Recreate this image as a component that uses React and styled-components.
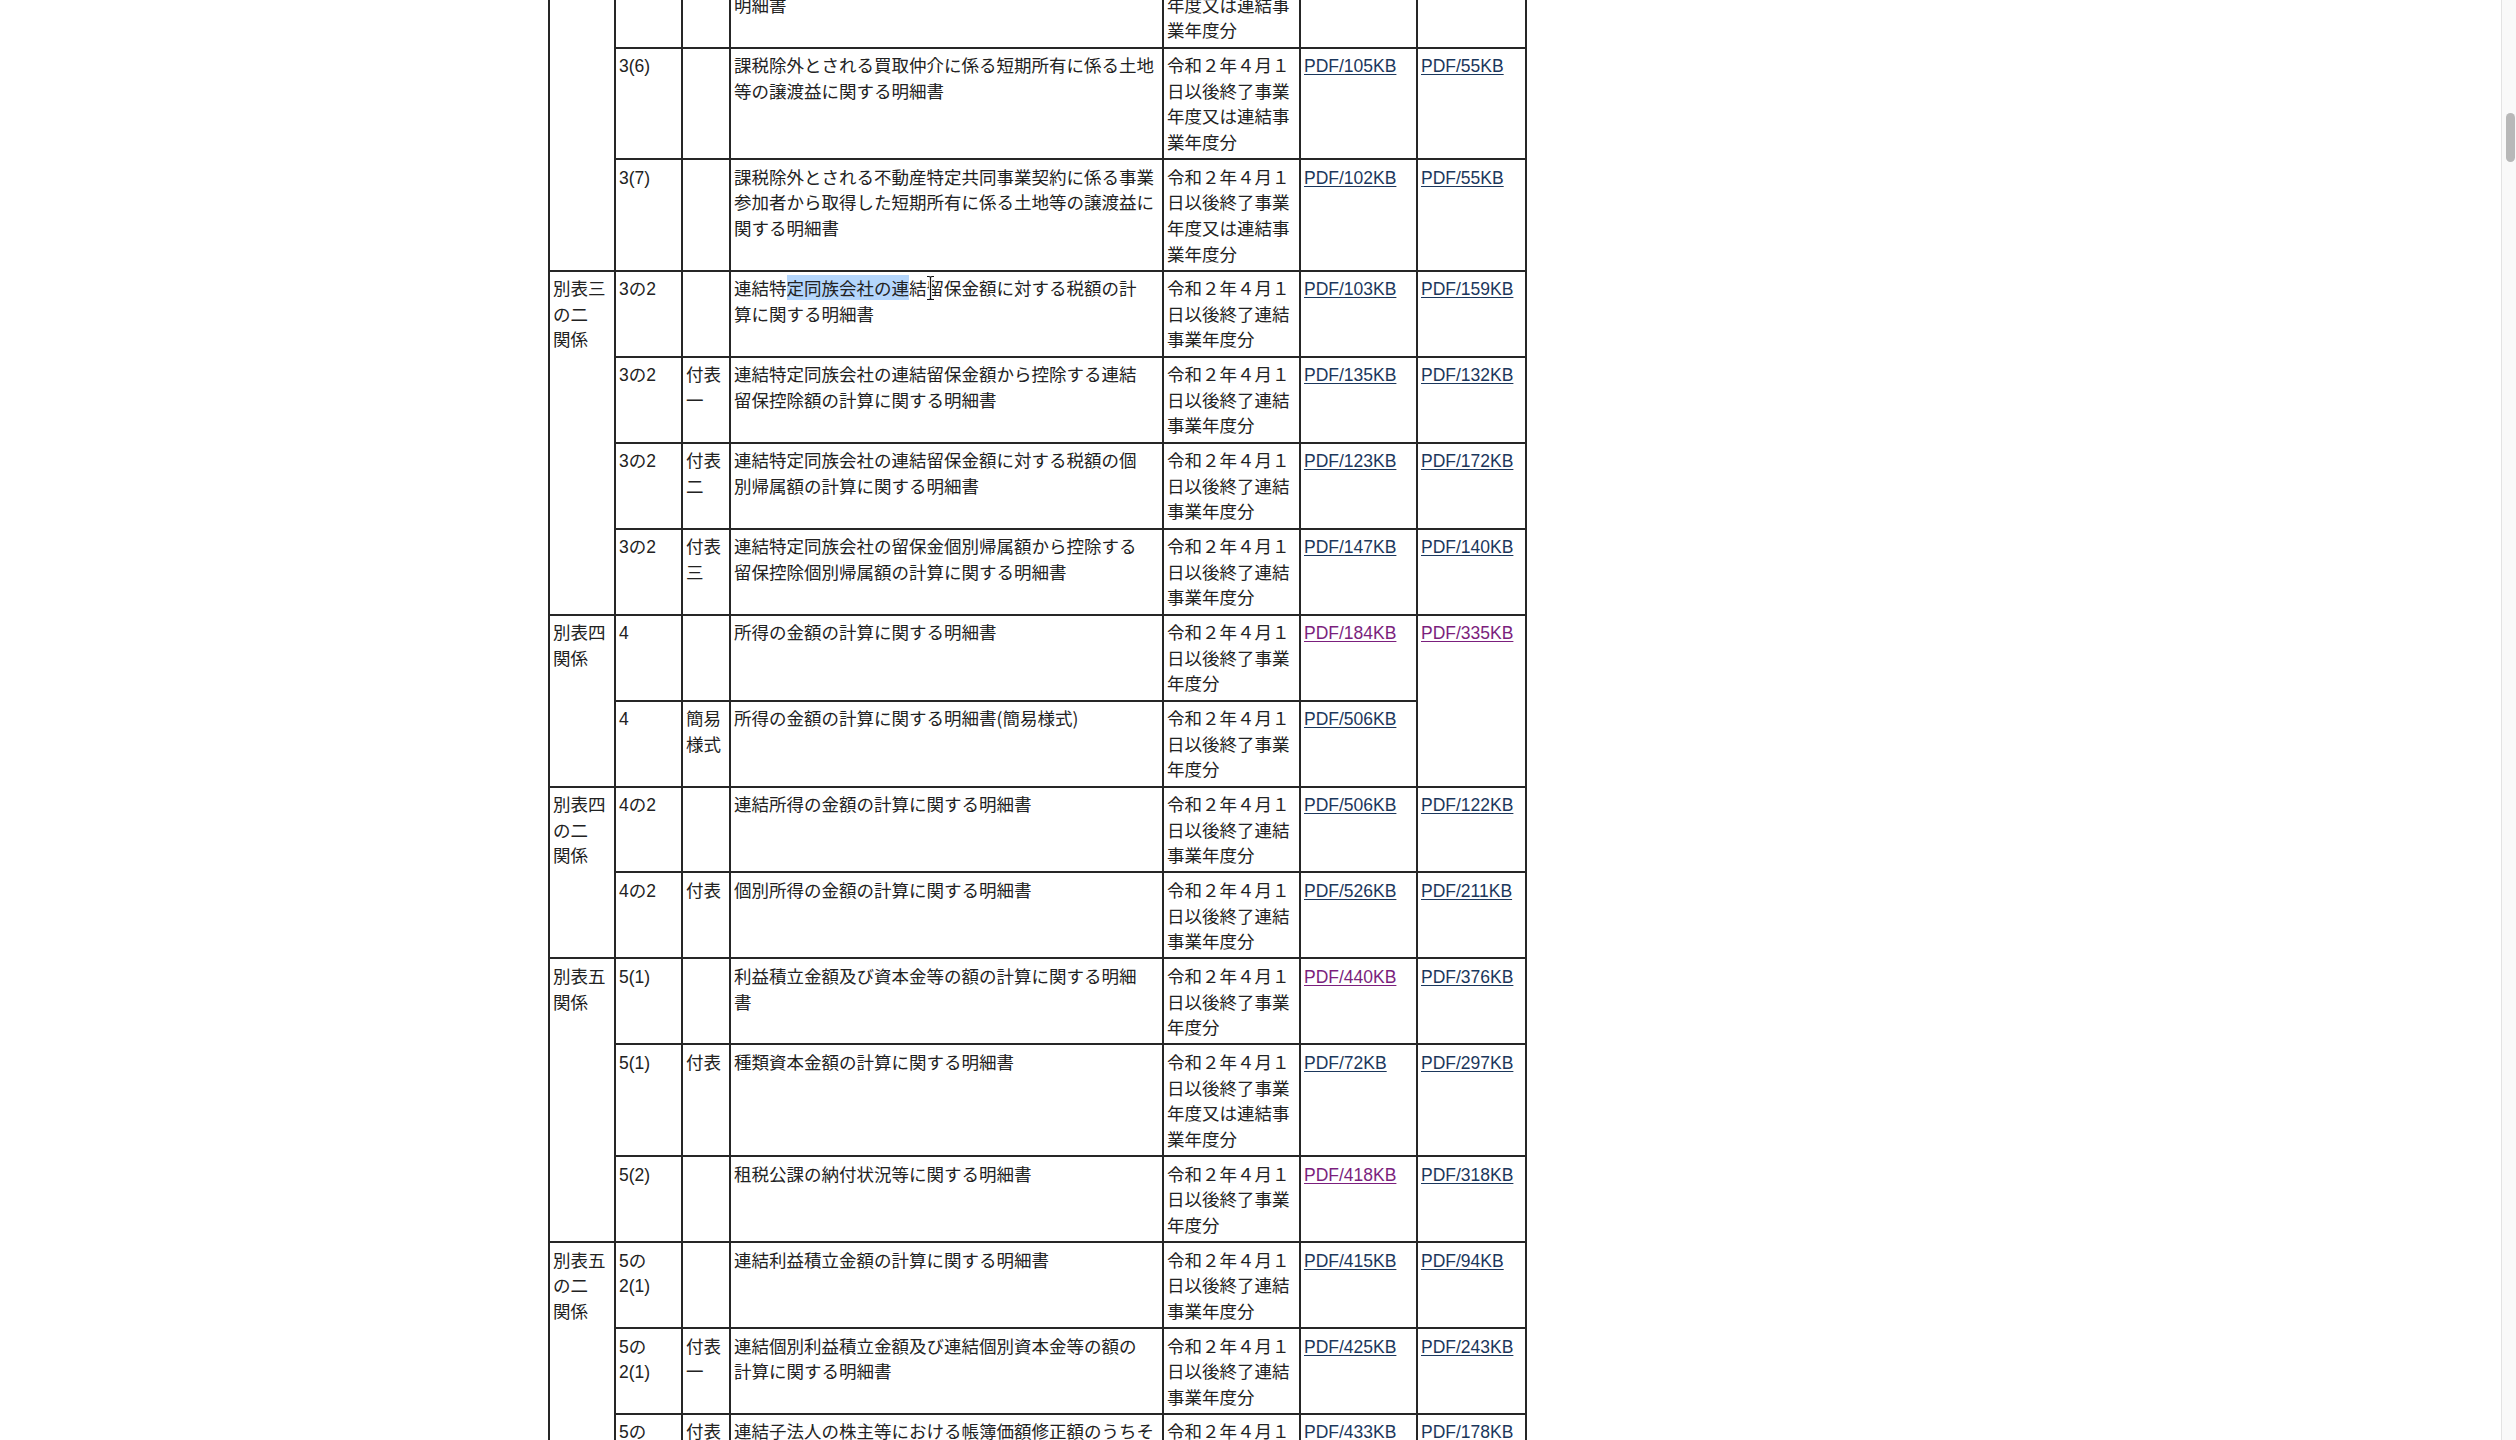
import React from "react";
import styled, { createGlobalStyle } from "styled-components";

const GlobalStyle = createGlobalStyle`
  html, body { margin: 0; padding: 0; background: #fff; overflow: hidden; }
  body { font-family: "Liberation Sans", "Noto Sans CJK JP", sans-serif; color: #222; }
`;

const Page = styled.div`
  display: flex;
  width: 100vw;
  height: 100vh;
  overflow: hidden;
`;

const Main = styled.main`
  flex: 1;
  min-width: 0;
  overflow: hidden;
  padding-left: 548px;
`;

const Table = styled.table`
  border-collapse: collapse;
  table-layout: fixed;
  width: 977px;
  margin-top: -65px;
  font-size: 17.5px;
  line-height: 25.6px;
  color: #222;
`;

const Cell = styled.td`
  position: relative;
  border: 2px solid #262626;
  padding: 3.6px 5px 3.6px 3px;
  vertical-align: baseline;
  text-align: left;
  font-family: ${(p) =>
    p.$cjk
      ? '"Noto Sans CJK JP", "Liberation Sans", sans-serif'
      : '"Liberation Sans", "Noto Sans CJK JP", sans-serif'};
`;

const Line = styled.span`
  display: block;
`;

const Selected = styled.span`
  background: #b4d6fc;
`;

const PdfLink = styled.a`
  font-family: "Liberation Sans", sans-serif;
  color: ${(p) => (p.$visited ? "#7b1f7d" : "#1b375c")};
  text-decoration: underline;
  text-decoration-thickness: 1px;
  text-underline-offset: 2px;
  white-space: nowrap;
`;

const Cursor = styled.svg`
  position: absolute;
  left: 194px;
  top: 3px;
  width: 11px;
  height: 26px;
  pointer-events: none;
`;

const ScrollTrack = styled.div`
  flex: none;
  width: 15px;
  box-sizing: border-box;
  height: 100%;
  background: #f9f9f9;
  border-left: 1px solid #e3e3e3;
  padding-top: 113px;
  display: flex;
  flex-direction: column;
  align-items: center;
`;

const ScrollThumb = styled.div`
  width: 9px;
  height: 49px;
  margin-left: 2px;
  border-radius: 5px;
  background: #b8b8b8;
`;

const DATE = {
  A: "令和２年４月１日以後終了事業年度又は連結事業年度分",
  B: "令和２年４月１日以後終了連結事業年度分",
  C: "令和２年４月１日以後終了事業年度分",
};

const COLS = [66, 67, 48, 433, 137, 117, 109];

const highlightLine = (
  <>
    連結特<Selected>定同族会社の連</Selected>結留保金額に対する税額の計
  </>
);

const groups = [
  {
    label: ["別表三", "関係"],
    rows: [
      {
        code: "3(5)",
        sub: "",
        desc: ["課税除外とされる収用交換等による短期所有に係る土", "地等の譲渡等に係る譲渡利益金額の特例計算に関する", "明細書"],
        date: "A",
        p1: { s: "PDF/98KB" },
        p2: { s: "PDF/56KB" },
      },
      {
        code: "3(6)",
        sub: "",
        desc: ["課税除外とされる買取仲介に係る短期所有に係る土地", "等の譲渡益に関する明細書"],
        date: "A",
        p1: { s: "PDF/105KB" },
        p2: { s: "PDF/55KB" },
      },
      {
        code: "3(7)",
        sub: "",
        desc: ["課税除外とされる不動産特定共同事業契約に係る事業", "参加者から取得した短期所有に係る土地等の譲渡益に", "関する明細書"],
        date: "A",
        p1: { s: "PDF/102KB" },
        p2: { s: "PDF/55KB" },
      },
    ],
  },
  {
    label: ["別表三", "の二", "関係"],
    rows: [
      {
        code: "3の2",
        sub: "",
        desc: [highlightLine, "算に関する明細書"],
        cursor: true,
        date: "B",
        p1: { s: "PDF/103KB" },
        p2: { s: "PDF/159KB" },
      },
      {
        code: "3の2",
        sub: "付表一",
        desc: ["連結特定同族会社の連結留保金額から控除する連結", "留保控除額の計算に関する明細書"],
        date: "B",
        p1: { s: "PDF/135KB" },
        p2: { s: "PDF/132KB" },
      },
      {
        code: "3の2",
        sub: "付表二",
        desc: ["連結特定同族会社の連結留保金額に対する税額の個", "別帰属額の計算に関する明細書"],
        date: "B",
        p1: { s: "PDF/123KB" },
        p2: { s: "PDF/172KB" },
      },
      {
        code: "3の2",
        sub: "付表三",
        desc: ["連結特定同族会社の留保金個別帰属額から控除する", "留保控除個別帰属額の計算に関する明細書"],
        date: "B",
        p1: { s: "PDF/147KB" },
        p2: { s: "PDF/140KB" },
      },
    ],
  },
  {
    label: ["別表四", "関係"],
    rows: [
      {
        code: "4",
        sub: "",
        desc: ["所得の金額の計算に関する明細書"],
        date: "C",
        p1: { s: "PDF/184KB", v: true },
        p2: { s: "PDF/335KB", v: true, span: 2 },
      },
      {
        code: "4",
        sub: "簡易様式",
        desc: ["所得の金額の計算に関する明細書(簡易様式)"],
        date: "C",
        p1: { s: "PDF/506KB" },
        p2: null,
      },
    ],
  },
  {
    label: ["別表四", "の二", "関係"],
    rows: [
      {
        code: "4の2",
        sub: "",
        desc: ["連結所得の金額の計算に関する明細書"],
        date: "B",
        p1: { s: "PDF/506KB" },
        p2: { s: "PDF/122KB" },
      },
      {
        code: "4の2",
        sub: "付表",
        desc: ["個別所得の金額の計算に関する明細書"],
        date: "B",
        p1: { s: "PDF/526KB" },
        p2: { s: "PDF/211KB" },
      },
    ],
  },
  {
    label: ["別表五", "関係"],
    rows: [
      {
        code: "5(1)",
        sub: "",
        desc: ["利益積立金額及び資本金等の額の計算に関する明細", "書"],
        date: "C",
        p1: { s: "PDF/440KB", v: true },
        p2: { s: "PDF/376KB" },
      },
      {
        code: "5(1)",
        sub: "付表",
        desc: ["種類資本金額の計算に関する明細書"],
        date: "A",
        p1: { s: "PDF/72KB" },
        p2: { s: "PDF/297KB" },
      },
      {
        code: "5(2)",
        sub: "",
        desc: ["租税公課の納付状況等に関する明細書"],
        date: "C",
        p1: { s: "PDF/418KB", v: true },
        p2: { s: "PDF/318KB" },
      },
    ],
  },
  {
    label: ["別表五", "の二", "関係"],
    rows: [
      {
        code: "5の2(1)",
        sub: "",
        desc: ["連結利益積立金額の計算に関する明細書"],
        date: "B",
        p1: { s: "PDF/415KB" },
        p2: { s: "PDF/94KB" },
      },
      {
        code: "5の2(1)",
        sub: "付表一",
        desc: ["連結個別利益積立金額及び連結個別資本金等の額の", "計算に関する明細書"],
        date: "B",
        p1: { s: "PDF/425KB" },
        p2: { s: "PDF/243KB" },
      },
      {
        code: "5の2(1)",
        sub: "付表二",
        desc: ["連結子法人の株主等における帳簿価額修正額のうちそ", "の他の連結法人株式等に係る部分の金額の計算に関", "する明細書"],
        date: "B",
        p1: { s: "PDF/433KB" },
        p2: { s: "PDF/178KB" },
      },
    ],
  },
];

function IBeam() {
  const d = "M2 1.5h2c.8 0 1.5.5 1.5 1.3 0-.8.7-1.3 1.5-1.3h2M5.5 2.8v20.4M2 24.5h2c.8 0 1.5-.5 1.5-1.3 0 .8.7 1.3 1.5 1.3h2";
  return (
    <Cursor viewBox="0 0 11 26">
      <path d={d} fill="none" stroke="#fff" strokeWidth="3" strokeLinecap="round" />
      <path d={d} fill="none" stroke="#111" strokeWidth="1.2" />
    </Cursor>
  );
}

function Row({ row, group, first }) {
  return (
    <tr>
      {first && (
        <Cell $cjk rowSpan={group.rows.length}>
          {group.label.map((l, i) => (
            <Line key={i}>{l}</Line>
          ))}
        </Cell>
      )}
      <Cell>{row.code}</Cell>
      <Cell $cjk>{row.sub}</Cell>
      <Cell $cjk>
        {row.desc.map((l, i) => (
          <Line key={i}>{l}</Line>
        ))}
        {row.cursor && <IBeam />}
      </Cell>
      <Cell $cjk>{DATE[row.date]}</Cell>
      <Cell>
        <PdfLink href="#" $visited={row.p1.v}>
          {row.p1.s}
        </PdfLink>
      </Cell>
      {row.p2 && (
        <Cell rowSpan={row.p2.span || 1}>
          <PdfLink href="#" $visited={row.p2.v}>
            {row.p2.s}
          </PdfLink>
        </Cell>
      )}
    </tr>
  );
}

export default function App() {
  return (
    <>
      <GlobalStyle />
      <Page>
        <Main>
          <Table>
            <colgroup>
              {COLS.map((w, i) => (
                <col key={i} style={{ width: w }} />
              ))}
            </colgroup>
            <tbody>
              {groups.map((g, gi) =>
                g.rows.map((r, ri) => <Row key={`${gi}-${ri}`} row={r} group={g} first={ri === 0} />)
              )}
            </tbody>
          </Table>
        </Main>
        <ScrollTrack>
          <ScrollThumb />
        </ScrollTrack>
      </Page>
    </>
  );
}
